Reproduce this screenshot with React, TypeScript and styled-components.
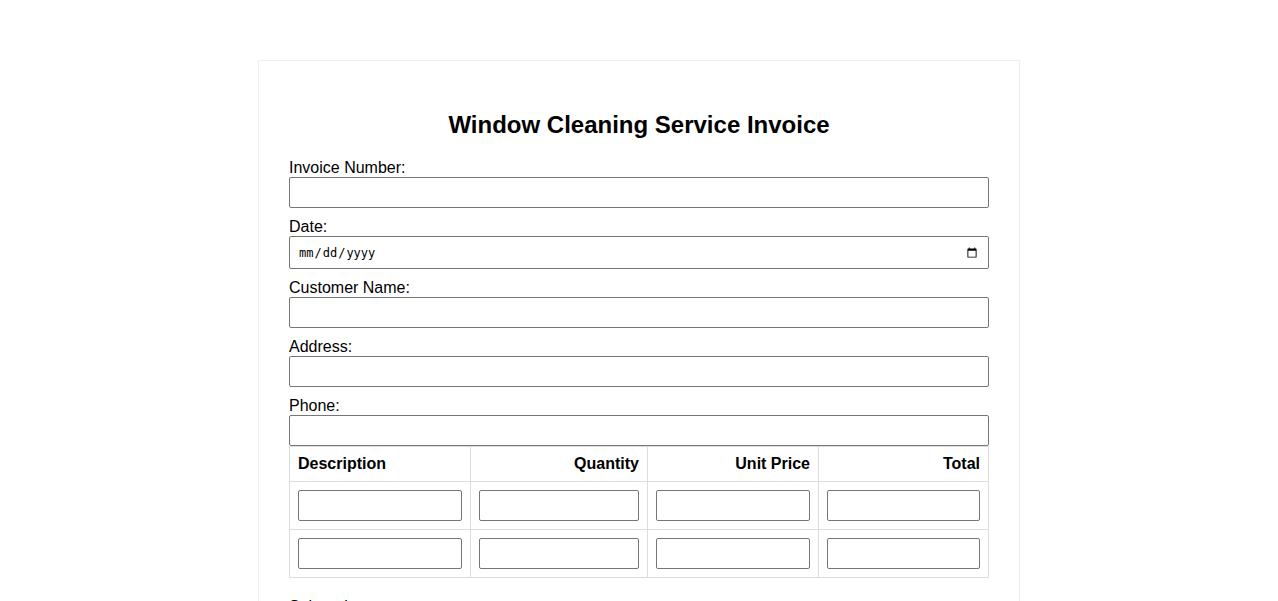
import styled, { createGlobalStyle } from "styled-components";

const GlobalStyle = createGlobalStyle`
  html, body {
    margin: 0;
    padding: 0;
    background: #ffffff;
    font-family: "Liberation Sans", Arial, sans-serif;
    color: #000000;
  }
`;

const Card = styled.div`
  width: 700px;
  margin: 60px auto 0;
  padding: 30px;
  border: 1px solid #eeeeee;
  background: #ffffff;
`;

const Title = styled.h2`
  font-size: 24px;
  font-weight: bold;
  text-align: center;
  margin: 20px 0 20px;
`;

const Field = styled.div`
  & + & {
    margin-top: 10px;
  }
`;

const Label = styled.label`
  display: block;
  font-size: 16px;
`;

const Input = styled.input<{ $tall?: boolean }>`
  display: block;
  box-sizing: border-box;
  width: 100%;
  height: ${(p) => (p.$tall ? "33px" : "31px")};
  margin: 0;
  padding: 0 8px;
  border: 1px solid #767676;
  border-radius: 2px;
  font-family: "Liberation Sans", Arial, sans-serif;
  font-size: 14px;
  background: #ffffff;

  &[type="date"] {
    font-family: "DejaVu Sans Mono", "Liberation Mono", monospace;
    font-size: 12px;
  }
`;

const Table = styled.table`
  width: 699px;
  border-collapse: collapse;
  table-layout: fixed;
`;

const Th = styled.th<{ $left?: boolean }>`
  padding: 8px;
  border: 1px solid #dddddd;
  font-size: 16px;
  font-weight: bold;
  text-align: ${(p) => (p.$left ? "left" : "right")};
`;

const Td = styled.td`
  padding: 8px;
  border: 1px solid #dddddd;
`;

const Summary = styled.div`
  margin-top: 20px;
`;

const Button = styled.button`
  margin-top: 20px;
  padding: 10px 20px;
  border: none;
  border-radius: 4px;
  background: #4caf50;
  color: #ffffff;
  font-size: 16px;
`;

const fields = [
  { label: "Invoice Number:", type: "text" },
  { label: "Date:", type: "date" },
  { label: "Customer Name:", type: "text" },
  { label: "Address:", type: "text" },
  { label: "Phone:", type: "tel" },
];

const colWidths = [181, 177, 171, 170];

export default function App() {
  return (
    <>
      <GlobalStyle />
      <Card>
        <Title>Window Cleaning Service Invoice</Title>
        {fields.map((f) => (
          <Field key={f.label}>
            <Label>{f.label}</Label>
            <Input type={f.type} $tall={f.type === "date"} />
          </Field>
        ))}
        <Table>
          <colgroup>
            {colWidths.map((w, i) => (
              <col key={i} style={{ width: w }} />
            ))}
          </colgroup>
          <thead>
            <tr>
              <Th $left>Description</Th>
              <Th>Quantity</Th>
              <Th>Unit Price</Th>
              <Th>Total</Th>
            </tr>
          </thead>
          <tbody>
            {[0, 1].map((r) => (
              <tr key={r}>
                {[0, 1, 2, 3].map((c) => (
                  <Td key={c}>
                    <Input type={c === 0 ? "text" : "number"} />
                  </Td>
                ))}
              </tr>
            ))}
          </tbody>
        </Table>
        <Summary>
          <Field>
            <Label>Subtotal:</Label>
            <Input type="number" />
          </Field>
          <Field>
            <Label>Tax:</Label>
            <Input type="number" />
          </Field>
          <Field>
            <Label>Total Amount:</Label>
            <Input type="number" />
          </Field>
        </Summary>
        <Button>Generate Invoice</Button>
      </Card>
    </>
  );
}
